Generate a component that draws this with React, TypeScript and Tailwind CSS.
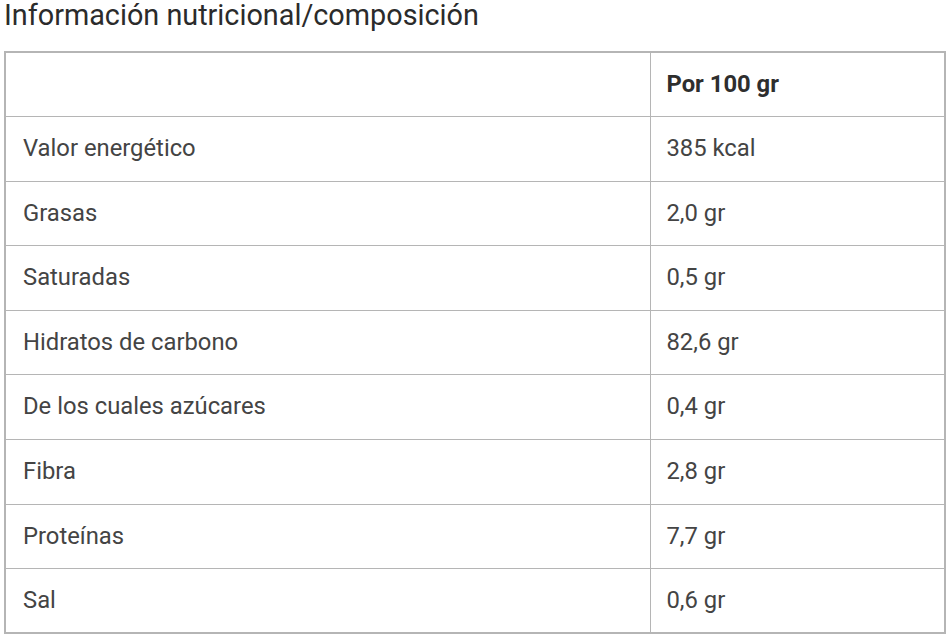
import React from "react";

interface Row {
  label: string;
  value: string;
}

const rows: Row[] = [
  { label: "Valor energético", value: "385 kcal" },
  { label: "Grasas", value: "2,0 gr" },
  { label: "Saturadas", value: "0,5 gr" },
  { label: "Hidratos de carbono", value: "82,6 gr" },
  { label: "De los cuales azúcares", value: "0,4 gr" },
  { label: "Fibra", value: "2,8 gr" },
  { label: "Proteínas", value: "7,7 gr" },
  { label: "Sal", value: "0,6 gr" },
];

const App: React.FC = () => {
  return (
    <div className="w-[950px] h-[636px] bg-white font-['Roboto',sans-serif] overflow-hidden">
      {/* Title */}
      <h2 className="pl-[4px] text-[28.8px] leading-[30px] text-[#2b2b2b] font-normal">
        Información nutricional/composición
      </h2>

      {/* Table */}
      <table className="ml-[4px] mt-[21px] w-[942px] border-collapse border-2 border-[#b5b5b5] text-[23.8px] text-[#444]">
        <tbody>
          <tr className="h-[64.6px]">
            <td className="w-[645px] border border-[#b5b5b5]"></td>
            <td className="border border-[#b5b5b5] pl-[16px] font-bold text-[#2e2e2e]">
              Por 100 gr
            </td>
          </tr>
          {rows.map((row) => (
            <tr key={row.label} className="h-[64.6px]">
              <td className="border border-[#b5b5b5] pl-[17px]">{row.label}</td>
              <td className="border border-[#b5b5b5] pl-[16px]">{row.value}</td>
            </tr>
          ))}
        </tbody>
      </table>
    </div>
  );
};

export default App;
